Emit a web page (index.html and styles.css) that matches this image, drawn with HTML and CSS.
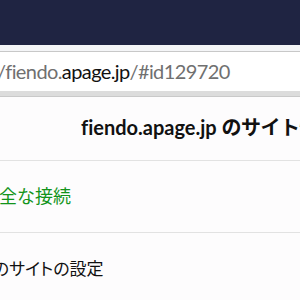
FILE: index.html
```html
<!DOCTYPE html>
<html lang="ja">
<head>
    <meta charset="UTF-8">
    <title>サイト情報</title>
    <link rel="stylesheet" href="styles.css">
</head>
<body>
    <div class="titlebar"></div>
    <div class="toolbar">
        <div class="urlbar">
            <span class="url"><span class="dim">/fiendo.</span>apage.jp<span class="dim">/#id129720</span></span>
        </div>
    </div>
    <div class="popup">
        <div class="popup-header">fiendo.apage.jp <span class="jp">のサイト情報</span></div>
        <div class="popup-row secure">安全な接続</div>
        <div class="popup-row settings">このサイトの設定</div>
    </div>
</body>
</html>
```

FILE: styles.css
```css
html, body {
    margin: 0;
    padding: 0;
    width: 300px;
    height: 300px;
    overflow: hidden;
    background: #fdfcfd;
    font-family: Lato, "Noto Sans CJK JP", sans-serif;
    font-variant-ligatures: none;
}

.titlebar {
    height: 45px;
    background: #1f2442;
}

.toolbar {
    background: #f4f5f7;
    padding-top: 6px;
    border-bottom: 1px solid #c9c9c9;
}

.urlbar {
    height: 39px;
    background: #fff;
    border-top: 1px solid #c8c8c8;
    border-bottom: 5px solid #dcdcdc;
    overflow: hidden;
    white-space: nowrap;
}

.url {
    display: block;
    margin-left: -3px;
    font-size: 20px;
    letter-spacing: -0.6px;
    line-height: 38px;
    color: #111;
}

.dim {
    color: #707070;
}

.popup {
    display: flex;
    flex-direction: column;
    overflow: hidden;
}

.popup-header {
    height: 63px;
    line-height: 60px;
    padding-left: 81px;
    white-space: nowrap;
    font-size: 20px;
    font-weight: bold;
    color: #111;
    border-bottom: 1px solid #e2e2e2;
}

.popup-header .jp {
    letter-spacing: -0.5px;
}

.popup-row {
    height: 71px;
    line-height: 70px;
    white-space: nowrap;
    border-bottom: 1px solid #e2e2e2;
}

.secure {
    font-size: 18px;
    margin-left: -19px;
    color: #13941b;
}

.settings {
    font-size: 17px;
    font-feature-settings: "palt";
    margin-left: -22px;
    line-height: 72px;
    color: #111;
    border-bottom: none;
}
```
